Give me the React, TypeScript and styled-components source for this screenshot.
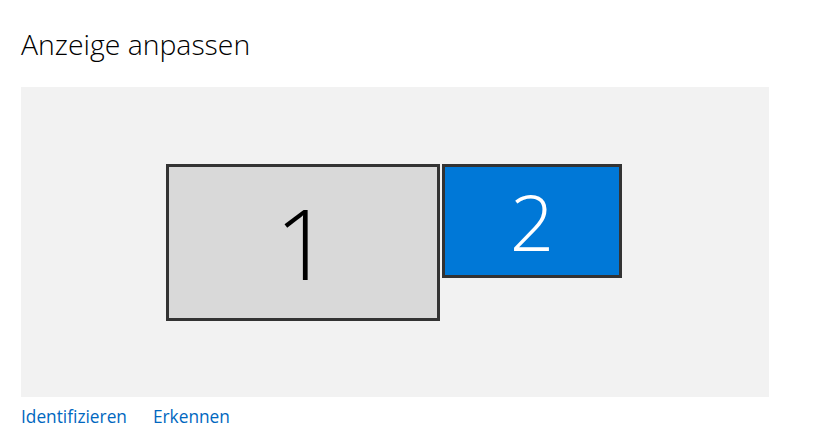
import React from 'react';
import styled, { createGlobalStyle } from 'styled-components';

const GlobalStyle = createGlobalStyle`
  html, body {
    margin: 0;
    padding: 0;
    background: #ffffff;
  }
  body {
    font-family: 'Segoe UI', 'Open Sans', 'Noto Sans', sans-serif;
  }
`;

const Page = styled.div`
  width: 832px;
  height: 440px;
  padding: 26px 0 0 21px;
  box-sizing: border-box;
  overflow: hidden;
`;

const Title = styled.h1`
  margin: 0;
  font-size: 28.4px;
  font-weight: 300;
  color: #000;
  line-height: 36px;
`;

const Arrangement = styled.div`
  margin-top: 25px;
  width: 748px;
  height: 310px;
  background: #f2f2f2;
  display: flex;
  align-items: center;
  justify-content: center;
`;

const MonitorRow = styled.div`
  display: flex;
  align-items: flex-start;
  gap: 2px;
  margin-left: -2px;
`;

const Monitor = styled.div<{ $w: number; $h: number; $active?: boolean }>`
  width: ${(p) => p.$w}px;
  height: ${(p) => p.$h}px;
  box-sizing: border-box;
  border: 3px solid #333;
  background: ${(p) => (p.$active ? '#0078d7' : '#d9d9d9')};
  color: ${(p) => (p.$active ? '#fff' : '#000')};
  display: flex;
  align-items: center;
  justify-content: center;
`;

const Number = styled.span<{ $size: number }>`
  font-size: ${(p) => p.$size}px;
  font-weight: 200;
  line-height: 1;
`;

const Links = styled.div`
  display: flex;
  gap: 26px;
  margin-top: 8px;
`;

const Link = styled.a`
  font-size: 17.3px;
  color: #0067c0;
  text-decoration: none;
  line-height: 24px;
  cursor: pointer;
`;

export default function App() {
  return (
    <>
      <GlobalStyle />
      <Page>
        <Title>Anzeige anpassen</Title>
        <Arrangement>
          <MonitorRow>
            <Monitor $w={274} $h={157}>
              <Number $size={98}>1</Number>
            </Monitor>
            <Monitor $w={180} $h={114} $active>
              <Number $size={78}>2</Number>
            </Monitor>
          </MonitorRow>
        </Arrangement>
        <Links>
          <Link>Identifizieren</Link>
          <Link>Erkennen</Link>
        </Links>
      </Page>
    </>
  );
}
